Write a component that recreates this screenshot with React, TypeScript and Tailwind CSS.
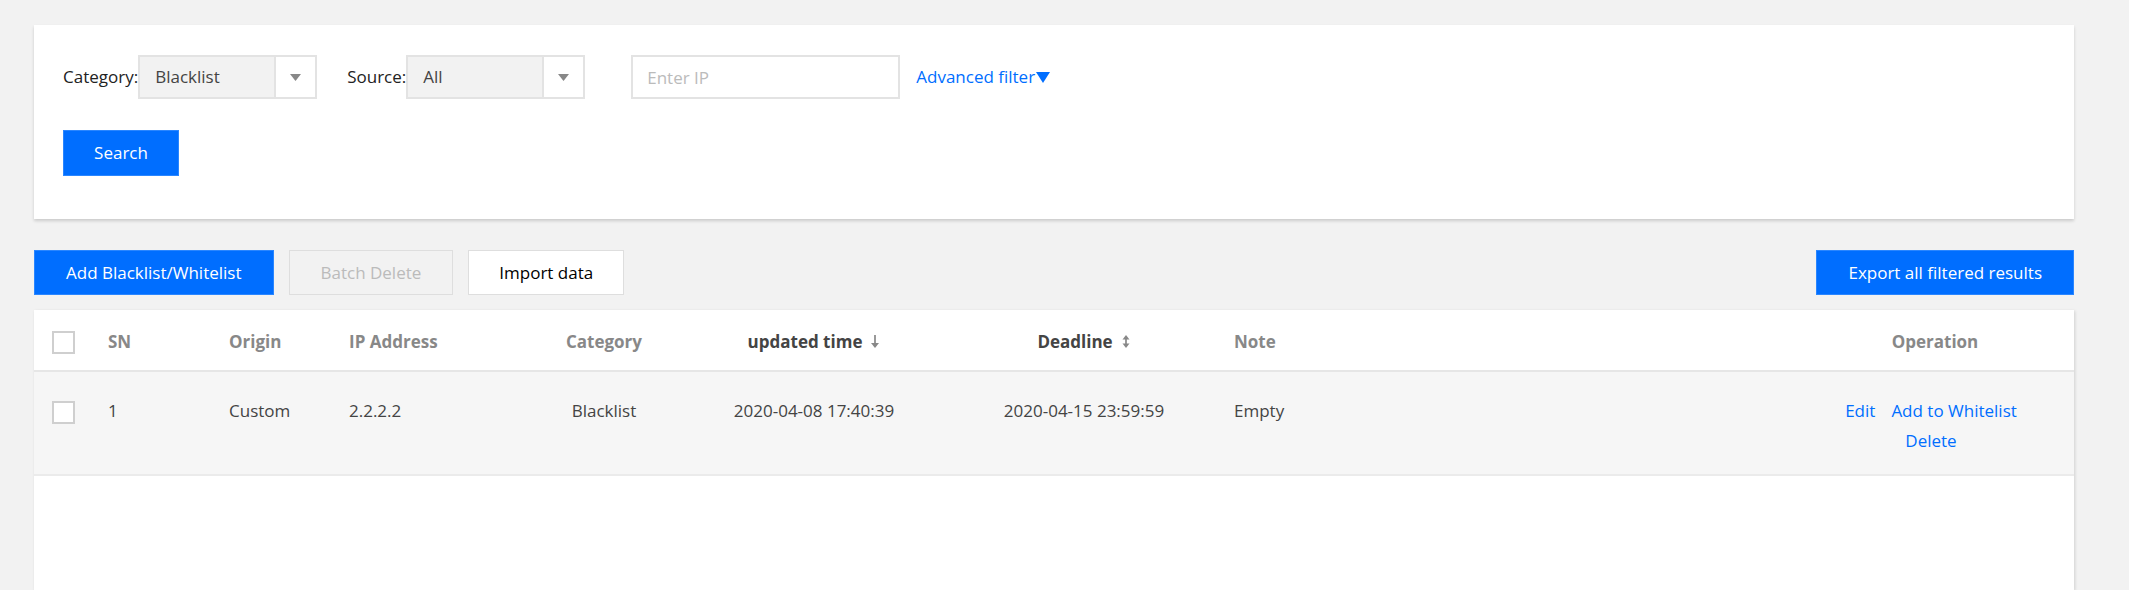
import React from "react";

const Caret = () => (
  <svg width="11" height="7" viewBox="0 0 11 7" className="block">
    <polygon points="0,0 11,0 5.5,7" fill="#888" />
  </svg>
);

const Select = ({ value }: { value: string }) => (
  <div className="flex h-[44px] w-[179px] border-2 border-[#e3e3e3]">
    <div className="flex flex-1 items-center bg-[#f2f2f2] pl-[15px] text-[#444]">{value}</div>
    <div className="flex w-[41px] items-center justify-center border-l-2 border-[#e3e3e3] bg-white">
      <Caret />
    </div>
  </div>
);

const Checkbox = () => <span className="inline-block h-[23px] w-[23px] border-2 border-[#cfcfcf] bg-white align-middle" />;

const SortDown = () => (
  <svg width="10" height="15" viewBox="0 0 10 15" className="ml-[8px] inline-block">
    <line x1="5" y1="1" x2="5" y2="11" stroke="#888" strokeWidth="1.7" />
    <polygon points="1,9 9,9 5,14" fill="#888" />
  </svg>
);

const SortBoth = () => (
  <svg width="10" height="15" viewBox="0 0 10 15" className="ml-[8px] inline-block">
    <polygon points="1.5,5.5 8.5,5.5 5,1" fill="#888" />
    <line x1="5" y1="4" x2="5" y2="11" stroke="#888" strokeWidth="1.7" />
    <polygon points="1.5,9.5 8.5,9.5 5,14" fill="#888" />
  </svg>
);

const App = () => (
  <div className="flex h-screen flex-col overflow-hidden bg-[#f2f2f2] pl-[34px] pr-[55px] pt-[25px] font-['Open_Sans',sans-serif] text-[17px] text-[#444]">
    {/* Filter panel */}
    <section className="bg-white pb-[43px] pl-[29px] pt-[30px] shadow-[0_2px_3px_rgba(0,0,0,0.16)]">
      <div className="flex h-[44px] items-center">
        <span className="text-[#222]">Category:</span>
        <Select value="Blacklist" />
        <span className="ml-[30px] text-[#222]">Source:</span>
        <Select value="All" />
        <input
          placeholder="Enter IP"
          className="ml-[46px] h-[44px] w-[269px] border-2 border-[#e3e3e3] px-[14px] text-[#444] outline-none placeholder:text-[#bbb]"
        />
        <button className="ml-[16px] flex items-center text-[#006eff]">
          Advanced filter
          <svg width="14" height="11" viewBox="0 0 14 11" className="ml-[1px]">
            <polygon points="0,0 14,0 7,11" fill="#006eff" />
          </svg>
        </button>
      </div>
      <button className="mt-[31px] h-[46px] w-[116px] border border-[#2a86ff] bg-[#006eff] text-white">Search</button>
    </section>

    {/* Toolbar */}
    <div className="mt-[31px] flex items-center justify-between">
      <div className="flex gap-[15px]">
        <button className="h-[45px] border border-[#2a86ff] bg-[#006eff] px-[31px] text-white">Add Blacklist/Whitelist</button>
        <button className="h-[45px] border border-[#dedede] bg-[#f2f2f2] px-[31px] text-[#bbb]">Batch Delete</button>
        <button className="h-[45px] border border-[#dedede] bg-white px-[30px] text-[#000]">Import data</button>
      </div>
      <button className="h-[45px] border border-[#2a86ff] bg-[#006eff] px-[31px] text-white">Export all filtered results</button>
    </div>

    {/* Table */}
    <div className="mt-[15px] flex flex-1 flex-col bg-white shadow-[1px_1px_3px_rgba(0,0,0,0.14)]">
      <table className="w-full table-fixed border-collapse">
        <colgroup>
          <col className="w-[56px]" />
          <col className="w-[121px]" />
          <col className="w-[120px]" />
          <col className="w-[189px]" />
          <col className="w-[168px]" />
          <col className="w-[252px]" />
          <col className="w-[288px]" />
          <col className="w-[568px]" />
          <col className="w-[278px]" />
        </colgroup>
        <thead>
          <tr className="h-[61px] border-b-2 border-[#e6e6e6] font-semibold text-[#888]">
            <th className="pl-[18px] pt-[3px] text-left"><Checkbox /></th>
            <th className="pl-[18px] pt-[3px] text-left">SN</th>
            <th className="pl-[18px] pt-[3px] text-left">Origin</th>
            <th className="pl-[18px] pt-[3px] text-left">IP Address</th>
            <th className="pt-[3px] text-center">Category</th>
            <th className="pt-[3px] text-center text-[#444]">
              <span className="inline-flex items-center">updated time<SortDown /></span>
            </th>
            <th className="pt-[3px] text-center text-[#444]">
              <span className="inline-flex items-center">Deadline<SortBoth /></span>
            </th>
            <th className="pl-[6px] pt-[3px] text-left">Note</th>
            <th className="pt-[3px] text-center">Operation</th>
          </tr>
        </thead>
        <tbody>
          <tr className="border-b-2 border-[#ebebeb] bg-[#f6f6f6] align-top leading-[30px]">
            <td className="pb-[18px] pl-[18px] pt-[24px]"><Checkbox /></td>
            <td className="pl-[18px] pt-[24px]">1</td>
            <td className="pl-[18px] pt-[24px]">Custom</td>
            <td className="pl-[18px] pt-[24px]">2.2.2.2</td>
            <td className="pt-[24px] text-center">Blacklist</td>
            <td className="pt-[24px] text-center">2020-04-08 17:40:39</td>
            <td className="pt-[24px] text-center">2020-04-15 23:59:59</td>
            <td className="pl-[6px] pt-[24px]">Empty</td>
            <td className="pb-[18px] pr-[8px] pt-[24px] text-center text-[#006eff]">
              <div>
                <a href="#">Edit</a>
                <a href="#" className="ml-[16px]">Add to Whitelist</a>
              </div>
              <div>
                <a href="#">Delete</a>
              </div>
            </td>
          </tr>
        </tbody>
      </table>
      <div className="flex-1 bg-white" />
    </div>
  </div>
);

export default App;
